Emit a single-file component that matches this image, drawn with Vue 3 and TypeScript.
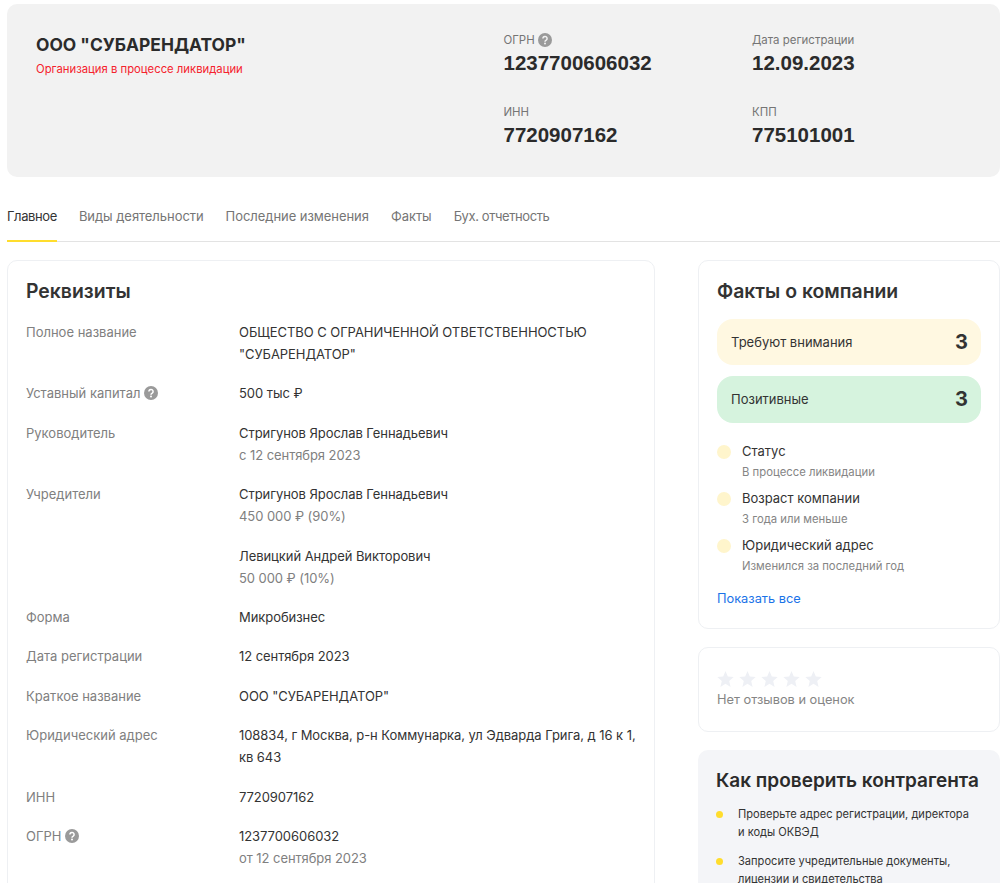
<script setup lang="ts">
interface Line {
  text: string
  sub?: boolean
}
interface Row {
  label: string
  hint?: boolean
  lines: Line[]
}

const codes = [
  { label: 'ОГРН', hint: true, value: '1237700606032' },
  { label: 'Дата регистрации', value: '12.09.2023' },
  { label: 'ИНН', value: '7720907162' },
  { label: 'КПП', value: '775101001' },
]

const tabs = ['Главное', 'Виды деятельности', 'Последние изменения', 'Факты', 'Бух. отчетность']

const rows: Row[] = [
  {
    label: 'Полное название',
    lines: [{ text: 'ОБЩЕСТВО С ОГРАНИЧЕННОЙ ОТВЕТСТВЕННОСТЬЮ "СУБАРЕНДАТОР"' }],
  },
  { label: 'Уставный капитал', hint: true, lines: [{ text: '500 тыс ₽' }] },
  {
    label: 'Руководитель',
    lines: [{ text: 'Стригунов Ярослав Геннадьевич' }, { text: 'с 12 сентября 2023', sub: true }],
  },
  {
    label: 'Учредители',
    lines: [{ text: 'Стригунов Ярослав Геннадьевич' }, { text: '450 000 ₽ (90%)', sub: true }],
  },
  {
    label: '',
    lines: [{ text: 'Левицкий Андрей Викторович' }, { text: '50 000 ₽ (10%)', sub: true }],
  },
  { label: 'Форма', lines: [{ text: 'Микробизнес' }] },
  { label: 'Дата регистрации', lines: [{ text: '12 сентября 2023' }] },
  { label: 'Краткое название', lines: [{ text: 'ООО "СУБАРЕНДАТОР"' }] },
  {
    label: 'Юридический адрес',
    lines: [{ text: '108834, г Москва, р-н Коммунарка, ул Эдварда Грига, д 16 к 1, кв 643' }],
  },
  { label: 'ИНН', lines: [{ text: '7720907162' }] },
  {
    label: 'ОГРН',
    hint: true,
    lines: [{ text: '1237700606032' }, { text: 'от 12 сентября 2023', sub: true }],
  },
]

const facts = [
  { title: 'Статус', note: 'В процессе ликвидации' },
  { title: 'Возраст компании', note: '3 года или меньше' },
  { title: 'Юридический адрес', note: 'Изменился за последний год' },
]

const tips = [
  'Проверьте адрес регистрации, директора и коды ОКВЭД',
  'Запросите учредительные документы, лицензии и свидетельства',
]
</script>

<template>
  <div class="page">
    <header class="head">
      <div class="head-name">
        <h1>ООО "СУБАРЕНДАТОР"</h1>
        <p class="liquidation">Организация в процессе ликвидации</p>
      </div>
      <div class="codes">
        <div v-for="code in codes" :key="code.label" class="code">
          <div class="code-label">
            {{ code.label }}
            <svg v-if="code.hint" class="hint" width="14" height="14" viewBox="0 0 14 14">
              <circle cx="7" cy="7" r="7" fill="#9a9a9a" />
              <path d="M4.9 5.5a2.1 2 0 1 1 3.3 1.6c-.8.5-1.2.9-1.2 1.6" fill="none" stroke="#f2f2f2" stroke-width="1.5" />
              <circle cx="7" cy="10.6" r="1" fill="#f2f2f2" />
            </svg>
          </div>
          <div class="code-value">{{ code.value }}</div>
        </div>
      </div>
    </header>

    <nav class="tabs">
      <a v-for="(tab, i) in tabs" :key="tab" class="tab" :class="{ active: i === 0 }">{{ tab }}</a>
    </nav>

    <div class="columns">
      <section class="card requisites">
        <h2>Реквизиты</h2>
        <dl class="rows">
          <div v-for="(row, i) in rows" :key="i" class="row">
            <dt>
              {{ row.label }}
              <svg v-if="row.hint" class="hint" width="14" height="14" viewBox="0 0 14 14">
                <circle cx="7" cy="7" r="7" fill="#9a9a9a" />
                <path d="M4.9 5.5a2.1 2 0 1 1 3.3 1.6c-.8.5-1.2.9-1.2 1.6" fill="none" stroke="#fff" stroke-width="1.5" />
                <circle cx="7" cy="10.6" r="1" fill="#fff" />
              </svg>
            </dt>
            <dd>
              <div v-for="line in row.lines" :key="line.text" :class="{ sub: line.sub }">{{ line.text }}</div>
            </dd>
          </div>
        </dl>
      </section>

      <aside class="side">
        <section class="card facts">
          <h2>Факты о компании</h2>
          <div class="pill pill-warn"><span>Требуют внимания</span><b>3</b></div>
          <div class="pill pill-good"><span>Позитивные</span><b>3</b></div>
          <ul class="fact-list">
            <li v-for="fact in facts" :key="fact.title">
              <i class="fact-dot"></i>
              <div>
                <div class="fact-title">{{ fact.title }}</div>
                <div class="fact-note">{{ fact.note }}</div>
              </div>
            </li>
          </ul>
          <a class="show-all">Показать все</a>
        </section>

        <section class="card reviews">
          <div class="stars">
            <svg v-for="n in 5" :key="n" width="17" height="16" viewBox="0 0 17 16">
              <path d="M8.5 0l2.3 5.6 5.9.5-4.5 3.9 1.4 6-5.1-3.2L3.4 16l1.4-6L.3 6.1l5.9-.5z" fill="#eef0f5" />
            </svg>
          </div>
          <div class="no-reviews">Нет отзывов и оценок</div>
        </section>

        <section class="check">
          <h3>Как проверить контрагента</h3>
          <ul>
            <li v-for="tip in tips" :key="tip">{{ tip }}</li>
          </ul>
        </section>
      </aside>
    </div>
  </div>
</template>

<style>
html,
body {
  height: 100%;
  overflow: hidden;
  background: #fff;
}
</style>

<style scoped>
.page {
  padding: 4px 7px 0;
  font-family: Inter, "Noto Sans", sans-serif;
  font-size: 13px;
  line-height: 22px;
  color: #333;
}

h1,
h2,
h3,
p,
dl,
dd,
ul {
  margin: 0;
  padding: 0;
}

.head {
  display: flex;
  height: 173px;
  box-sizing: border-box;
  padding: 28px 29px 0;
  background: #f2f2f2;
  border-radius: 10px;
}

.head-name {
  width: 467.5px;
}

h1 {
  font-size: 17.4px;
  line-height: 26px;
  font-weight: 700;
  color: #2b2b2b;
}

.liquidation {
  font-size: 11.3px;
  line-height: 16px;
  margin-top: 3px;
  color: #f5222d;
}

.codes {
  display: grid;
  grid-template-columns: 248.5px 1fr;
  row-gap: 27px;
  align-content: start;
}

.code-label {
  display: flex;
  align-items: center;
  gap: 3px;
  font-size: 11.45px;
  line-height: 16px;
  color: #757575;
}

.code-value {
  font-family: "Liberation Sans", Arial, sans-serif;
  font-size: 20.5px;
  line-height: 28px;
  font-weight: 700;
  color: #2b2b2b;
  margin-top: 1px;
}

.tabs {
  display: flex;
  gap: 22px;
  height: 65px;
  box-sizing: border-box;
  border-bottom: 1px solid #e3e3e3;
}

.tab {
  box-sizing: border-box;
  height: 65px;
  padding-top: 28px;
  letter-spacing: -0.05px;
  color: #757575;
  white-space: nowrap;
}

.tab:last-child {
  letter-spacing: -0.4px;
}

.tab.active {
  color: #333;
  letter-spacing: -0.4px;
  border-bottom: 2px solid #ffdd2d;
}

.columns {
  display: flex;
  justify-content: space-between;
  align-items: flex-start;
  margin-top: 18px;
}

.card {
  box-sizing: border-box;
  border: 1px solid #eef0f3;
  border-radius: 10px;
  background: #fff;
}

.requisites {
  width: 648px;
  padding: 18px 18px 30px;
}

h2 {
  font-size: 19.4px;
  line-height: 24px;
  font-weight: 600;
  color: #333;
}

.rows {
  margin-top: 18px;
}

.row {
  display: grid;
  grid-template-columns: 213px 1fr;
  margin-bottom: 17.4px;
}

dt {
  display: flex;
  align-items: center;
  align-self: start;
  gap: 4px;
  height: 22px;
  color: #808080;
}

dd {
  letter-spacing: -0.06px;
}

.hint {
  flex: none;
}

.sub {
  color: #808080;
}

.side {
  width: 302px;
  display: flex;
  flex-direction: column;
}

.facts {
  height: 369px;
  padding: 18px 18px 0;
}

.pill {
  display: flex;
  align-items: center;
  justify-content: space-between;
  box-sizing: border-box;
  padding: 0 14px;
  border-radius: 16px;
  color: #333;
}

.pill b {
  font-size: 20px;
  font-weight: 700;
  margin-right: -1px;
}

.pill-warn {
  height: 46px;
  margin-top: 16px;
  background: #fff8e1;
}

.pill-good {
  height: 47px;
  margin-top: 11px;
  padding-bottom: 1px;
  background: #d6f3de;
}

.fact-list {
  list-style: none;
  margin-top: 17px;
}

.fact-list li {
  display: flex;
  gap: 11px;
  height: 47px;
}

.fact-dot {
  flex: none;
  width: 14px;
  height: 14px;
  margin-top: 5px;
  border-radius: 50%;
  background: #fff5cc;
}

.fact-title {
  line-height: 22px;
}

.fact-note {
  font-size: 11.3px;
  line-height: 20px;
  color: #858585;
}

.show-all {
  display: block;
  margin-top: 7px;
  font-size: 12.8px;
  color: #1a73e8;
}

.reviews {
  height: 85px;
  margin-top: 18px;
  padding: 23px 18px 0;
}

.stars {
  display: flex;
  gap: 5px;
  height: 16px;
}

.no-reviews {
  margin-top: 2px;
  font-size: 12.8px;
  color: #858585;
}

.check {
  margin-top: 18px;
  padding: 17px 18px;
  background: #f4f5f8;
  border-radius: 10px;
  height: 200px;
  box-sizing: border-box;
}

h3 {
  font-size: 19px;
  line-height: 28px;
  font-weight: 600;
  color: #2b2b2b;
}

.check ul {
  list-style: none;
  margin-top: 10px;
}

.check li {
  position: relative;
  padding: 0 8px 0 22px;
  margin-bottom: 11px;
  font-size: 11.1px;
  line-height: 18px;
}

.check li::before {
  content: "";
  position: absolute;
  left: 0;
  top: 6px;
  width: 7px;
  height: 7px;
  border-radius: 50%;
  background: #ffdd2d;
}
</style>
